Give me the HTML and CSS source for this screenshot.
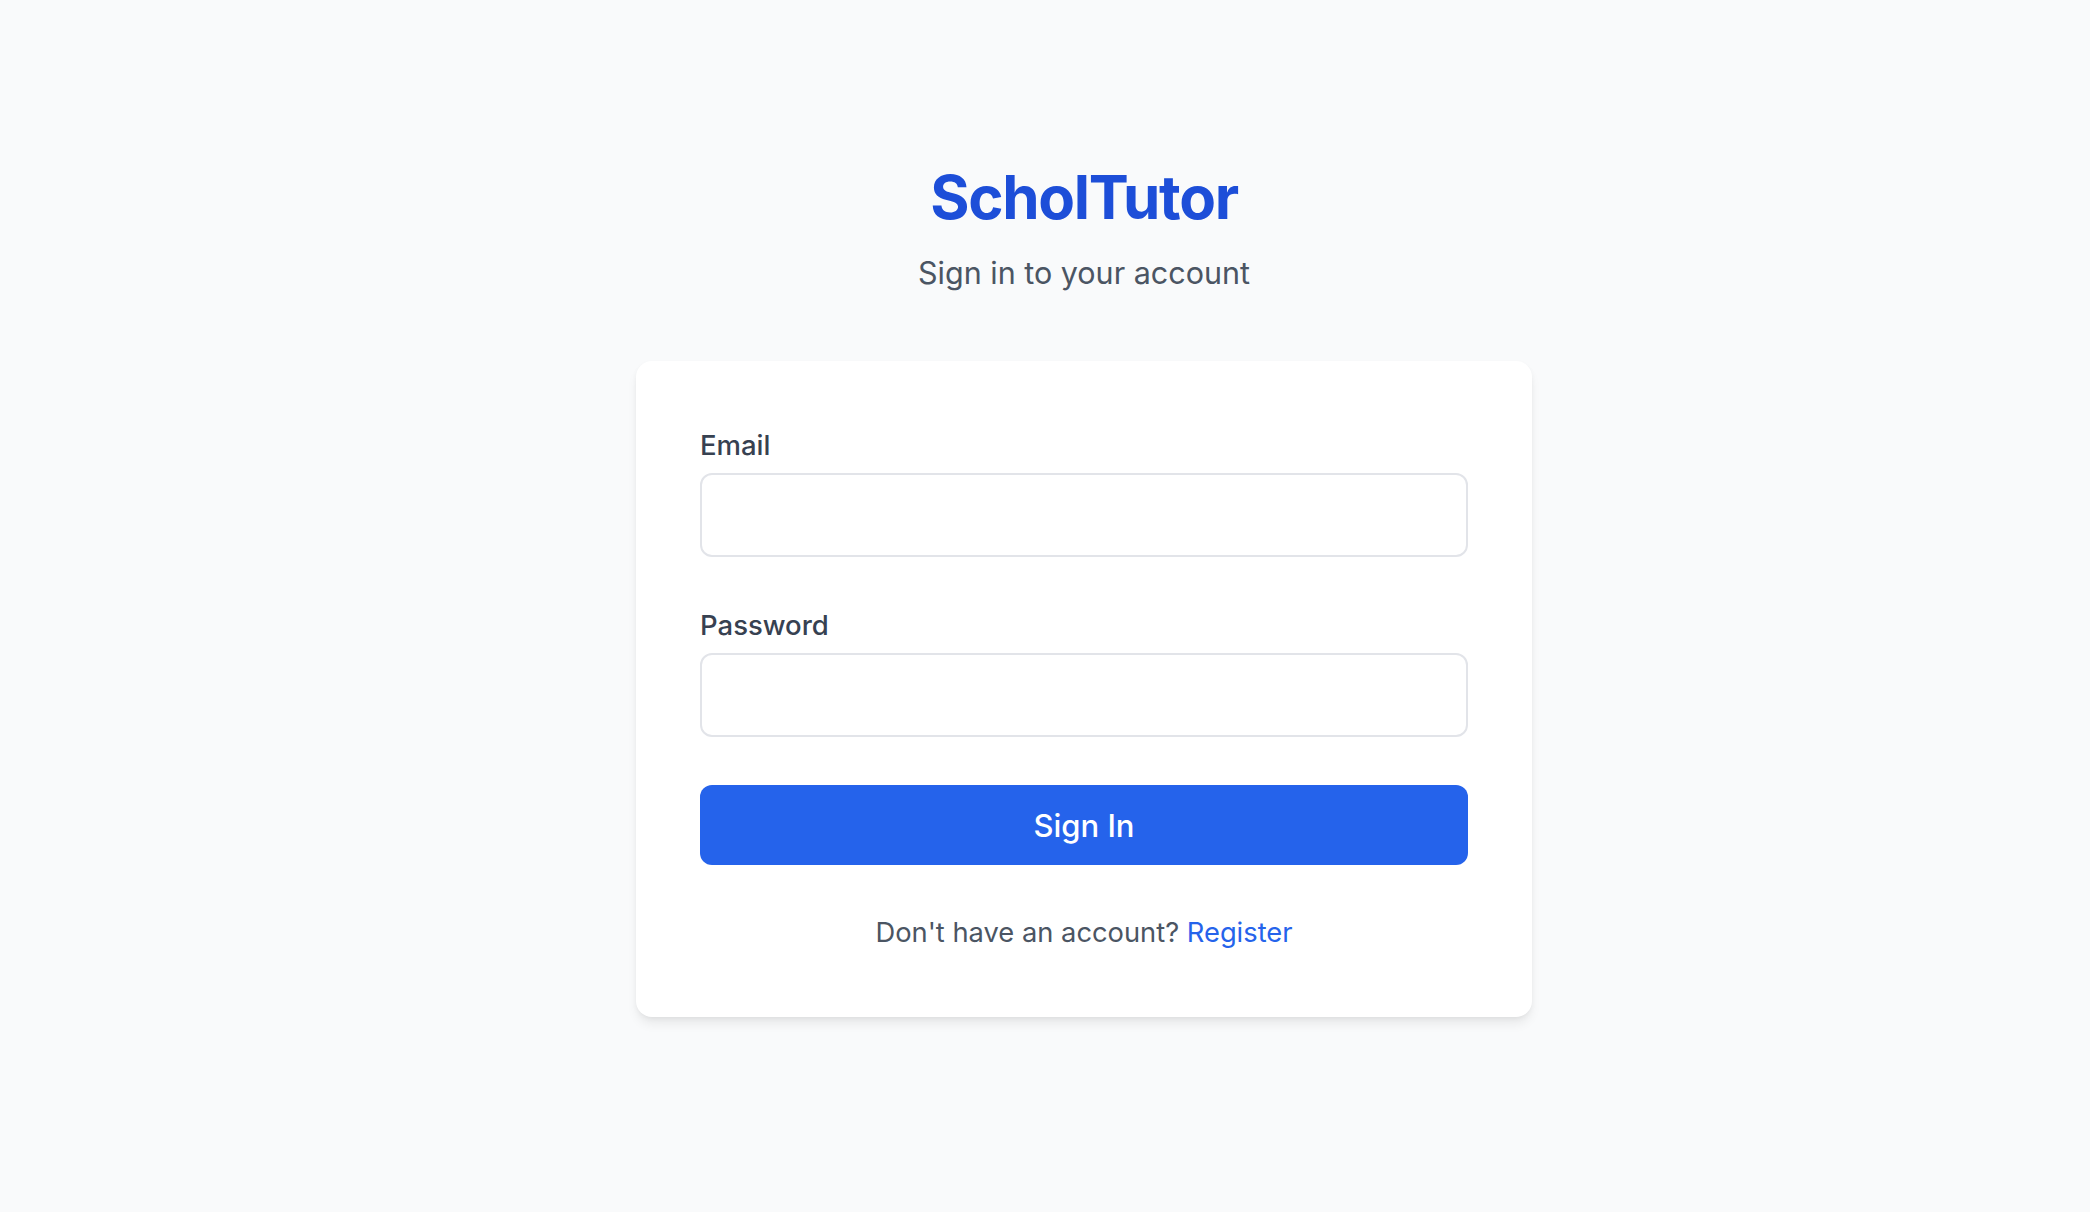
FILE: index.html
```html
<!DOCTYPE html>
<html lang="en">
<head>
<meta charset="utf-8">
<title>ScholTutor - Sign in</title>
<link rel="stylesheet" href="styles.css">
</head>
<body>
<main class="page">
  <div class="wrap">
    <header class="head">
      <h1 class="brand">ScholTutor</h1>
      <p class="sub">Sign in to your account</p>
    </header>
    <form class="card">
      <div class="field">
        <label class="label" for="email">Email</label>
        <input class="input" id="email" type="email">
      </div>
      <div class="field">
        <label class="label" for="password">Password</label>
        <input class="input" id="password" type="password">
      </div>
      <button class="btn" type="button">Sign In</button>
      <p class="foot">Don't have an account? <a class="link" href="#">Register</a></p>
    </form>
  </div>
</main>
</body>
</html>
```

FILE: styles.css
```css
* { box-sizing: border-box; }
html, body { margin: 0; padding: 0; }
body {
  background: #f9fafb;
  font-family: Inter, "Noto Sans", "Liberation Sans", sans-serif;
  color: #374151;
  min-height: 1212px;
}
.page {
  display: flex;
  justify-content: center;
  padding: 161px 0 0 78px;
}
.wrap {
  width: 896px;
  display: flex;
  flex-direction: column;
}
.head {
  text-align: center;
  margin-bottom: 64px;
}
.brand {
  margin: 0;
  font-size: 60px;
  line-height: 72px;
  font-weight: 700;
  letter-spacing: -1.3px;
  color: #1d4ed8;
}
.sub {
  margin: 16px 0 0;
  font-size: 30.5px;
  line-height: 48px;
  color: #4b5563;
}
.card {
  background: #fff;
  border-radius: 16px;
  padding: 64px;
  box-shadow: 0 8px 12px -2px rgba(0,0,0,0.08), 0 2px 6px -2px rgba(0,0,0,0.08);
  display: flex;
  flex-direction: column;
  gap: 48px;
  margin: 0;
}
.field {
  display: flex;
  flex-direction: column;
  gap: 8px;
}
.label {
  font-size: 27.5px;
  line-height: 40px;
  font-weight: 500;
  color: #374151;
}
.input {
  height: 84px;
  border: 2px solid #e2e4e9;
  border-radius: 12px;
  background: #fff;
  font: inherit;
  font-size: 32px;
  padding: 0 24px;
  outline: none;
}
.btn {
  height: 80px;
  border: none;
  border-radius: 12px;
  background: #2563eb;
  color: #fff;
  font-family: inherit;
  font-size: 31px;
  font-weight: 500;
  cursor: pointer;
}
.foot {
  margin: 0;
  text-align: center;
  font-size: 27.3px;
  line-height: 40px;
  color: #4b5563;
}
.link {
  color: #2563eb;
  text-decoration: none;
}
```
